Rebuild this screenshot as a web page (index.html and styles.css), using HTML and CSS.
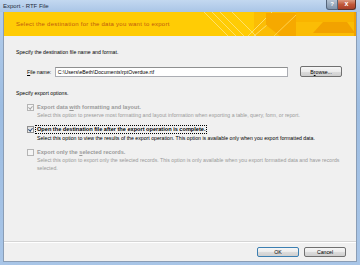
FILE: index.html
```html
<!DOCTYPE html>
<html lang="en">
<head>
    <meta charset="UTF-8">
    <title>Export - RTF File</title>
    <link rel="stylesheet" href="styles.css">
</head>
<body>
    <div class="titlebar">
        <span class="title">Export - RTF File</span>
        <div class="caption-buttons">
            <span class="help-btn">?</span>
            <span class="close-btn">x</span>
        </div>
    </div>
    <div class="client">
        <div class="banner">
            <svg class="banner-art" width="352" height="24" viewBox="0 0 352 24">
                <rect x="0" y="0" width="352" height="24" fill="#ffcc05"/>
                <rect x="250" y="0" width="102" height="24" fill="#fbbd05"/>
                <g stroke="#ffe680" stroke-width="1" opacity="0.8">
                    <line x1="200" y1="0" x2="224" y2="24"/>
                    <line x1="208" y1="0" x2="232" y2="24"/>
                    <line x1="216" y1="0" x2="240" y2="24"/>
                    <line x1="228" y1="0" x2="252" y2="24"/>
                    <line x1="276" y1="2" x2="250" y2="24"/>
                    <line x1="268" y1="0" x2="244" y2="24"/>
                </g>
                <polygon points="262,1 292,1 292,24 276,24 262,13" fill="#f6a900"/>
                <line x1="292" y1="3" x2="270" y2="24" stroke="#ffd24d" stroke-width="1"/>
                <polygon points="292,0 352,0 352,10 292,10" fill="#f9b400"/>
                <polygon points="319,10 343,10 351,21 309,21" fill="#f2a200"/>
                <rect x="350" y="0" width="2" height="24" fill="#f2a200"/>
            </svg>
            <span class="banner-text">Select the destination for the data you want to export</span>
        </div>

        <div class="content">
            <p class="intro">Specify the destination file name and format.</p>
            <div class="file-row">
                <label class="file-label"><u>F</u>ile name:</label>
                <div class="file-input">C:\Users\eBeth\Documents\rptOverdue.rtf</div>
                <button class="btn browse-btn">B<u>r</u>owse...</button>
            </div>
            <p class="intro options-title">Specify export options.</p>

            <div class="option disabled">
                <span class="checkbox checked"></span>
                <span class="option-label">Export data <u>w</u>ith formatting and layout.</span>
                <span class="option-desc">Select this option to preserve most formatting and layout information when exporting a table, query, form, or report.</span>
            </div>
            <div class="option">
                <span class="checkbox checked"></span>
                <span class="option-label"><span class="focus">Open the destination file after the export operation is complete.</span></span>
                <span class="option-desc">Select this option to view the results of the export operation. This option is available only when you export formatted data.</span>
            </div>
            <div class="option disabled">
                <span class="checkbox"></span>
                <span class="option-label">Export only the <u>s</u>elected records.</span>
                <span class="option-desc">Select this option to export only the selected records. This option is only available when you export formatted data and have records selected.</span>
            </div>
        </div>

        <div class="footer">
            <button class="btn default-btn">OK</button>
            <button class="btn">Cancel</button>
        </div>
    </div>
</body>
</html>
```

FILE: styles.css
```css
body {
    font-family: "Liberation Sans", Arial, sans-serif;
    font-size: 5.2px;
    margin: 0;
    width: 360px;
    height: 265px;
    display: flex;
    flex-direction: column;
    background: linear-gradient(to bottom, #b6cfec, #9dbde2 40%, #a8c5e7);
    overflow: hidden;
}
.titlebar {
    height: 12px;
    display: flex;
    align-items: flex-start;
    justify-content: space-between;
    padding: 0 4px 0 3px;
    background: linear-gradient(to bottom, #c3d8f0, #a9c5e6);
}
.title {
    font-size: 6px;
    color: #1e2b3c;
    line-height: 12px;
}
.caption-buttons {
    display: flex;
    height: 10px;
}
.help-btn {
    display: block;
    width: 10px;
    height: 9px;
    font-size: 6px;
    font-weight: bold;
    line-height: 9px;
    text-align: center;
    color: #ffffff;
    background: linear-gradient(to bottom, #b4c2d2, #7f93aa);
    border: 1px solid #55657a;
    border-top: none;
    border-radius: 0 0 0 3px;
}
.close-btn {
    display: block;
    width: 17px;
    height: 9px;
    font-size: 7px;
    line-height: 8px;
    text-align: center;
    color: #ffffff;
    font-weight: bold;
    background: linear-gradient(to bottom, #dc9a80, #c0583a 50%, #a8402a);
    border: 1px solid #5e3328;
    border-top: none;
    border-left: none;
    border-radius: 0 0 3px 0;
}
.client {
    flex: 1;
    margin: 0 3px 3px 3px;
    border: 1px solid #8a9db5;
    border-top: none;
    background-color: #f0f0f0;
    display: flex;
    flex-direction: column;
}
.banner {
    height: 24px;
    position: relative;
    display: flex;
    align-items: center;
    padding-left: 12px;
}
.banner-art {
    position: absolute;
    top: 0;
    left: 0;
}
.banner-text {
    position: relative;
    font-size: 6px;
    letter-spacing: 0.25px;
    color: #c0590f;
}
.content {
    flex: 1;
    padding: 0 14px 0 12px;
}
p {
    margin: 0;
    line-height: 8px;
}
.intro {
    margin-top: 12px;
    color: #000;
}
.file-row {
    display: flex;
    align-items: center;
    margin-top: 10px;
    padding-left: 11px;
}
.file-label {
    width: 28px;
}
.file-input {
    width: 229px;
    height: 8px;
    line-height: 8px;
    font-size: 5.2px;
    padding: 0 2px;
    background-color: #ffffff;
    border: 1px solid #abadb3;
    border-top-color: #8e8f8f;
}
.btn {
    font-family: "Liberation Sans", Arial, sans-serif;
    font-size: 5.2px;
    width: 42px;
    height: 10px;
    padding: 0;
    color: #000;
    background: linear-gradient(to bottom, #f6f6f6, #ebebeb 50%, #dcdcdc 51%, #cfcfcf);
    border: 1px solid #707070;
    border-radius: 2px;
}
.browse-btn {
    margin-left: 12px;
    height: 11px;
}
.options-title {
    margin-top: 12px;
}
.option {
    display: grid;
    grid-template-columns: 10px 1fr;
    align-items: center;
    margin-top: 6px;
    padding-left: 11px;
    line-height: 8px;
}
.checkbox {
    width: 5px;
    height: 5px;
    border: 1px solid #8f8f8f;
    background: linear-gradient(to bottom right, #dcdcdc, #fbfbfb);
    position: relative;
}
.checkbox.checked::after {
    content: "";
    position: absolute;
    left: 1px;
    top: 0;
    width: 1.5px;
    height: 3px;
    border-right: 1px solid #2b4a7a;
    border-bottom: 1px solid #2b4a7a;
    transform: rotate(40deg);
}
.option-label {
    font-weight: bold;
    font-size: 5.6px;
    color: #000;
}
.focus {
    display: inline-block;
    line-height: 7px;
    border: 1px dotted #000;
    padding: 0 1px;
    margin-left: -2px;
}
.option-desc {
    grid-column: 2;
    color: #000;
}
.disabled .option-label,
.disabled .option-desc {
    color: #9a9a9a;
}
.disabled .checkbox {
    border-color: #b5b5b5;
    background: #f4f4f4;
}
.disabled .checkbox.checked::after {
    border-color: #a5a5a5;
}
.footer {
    display: flex;
    justify-content: flex-end;
    gap: 5px;
    padding: 5px 10px 4px 0;
    border-top: 1px solid #d5d5d5;
    box-shadow: inset 0 1px 0 #ffffff;
}
.default-btn {
    border-color: #3c7fb1;
}
```
